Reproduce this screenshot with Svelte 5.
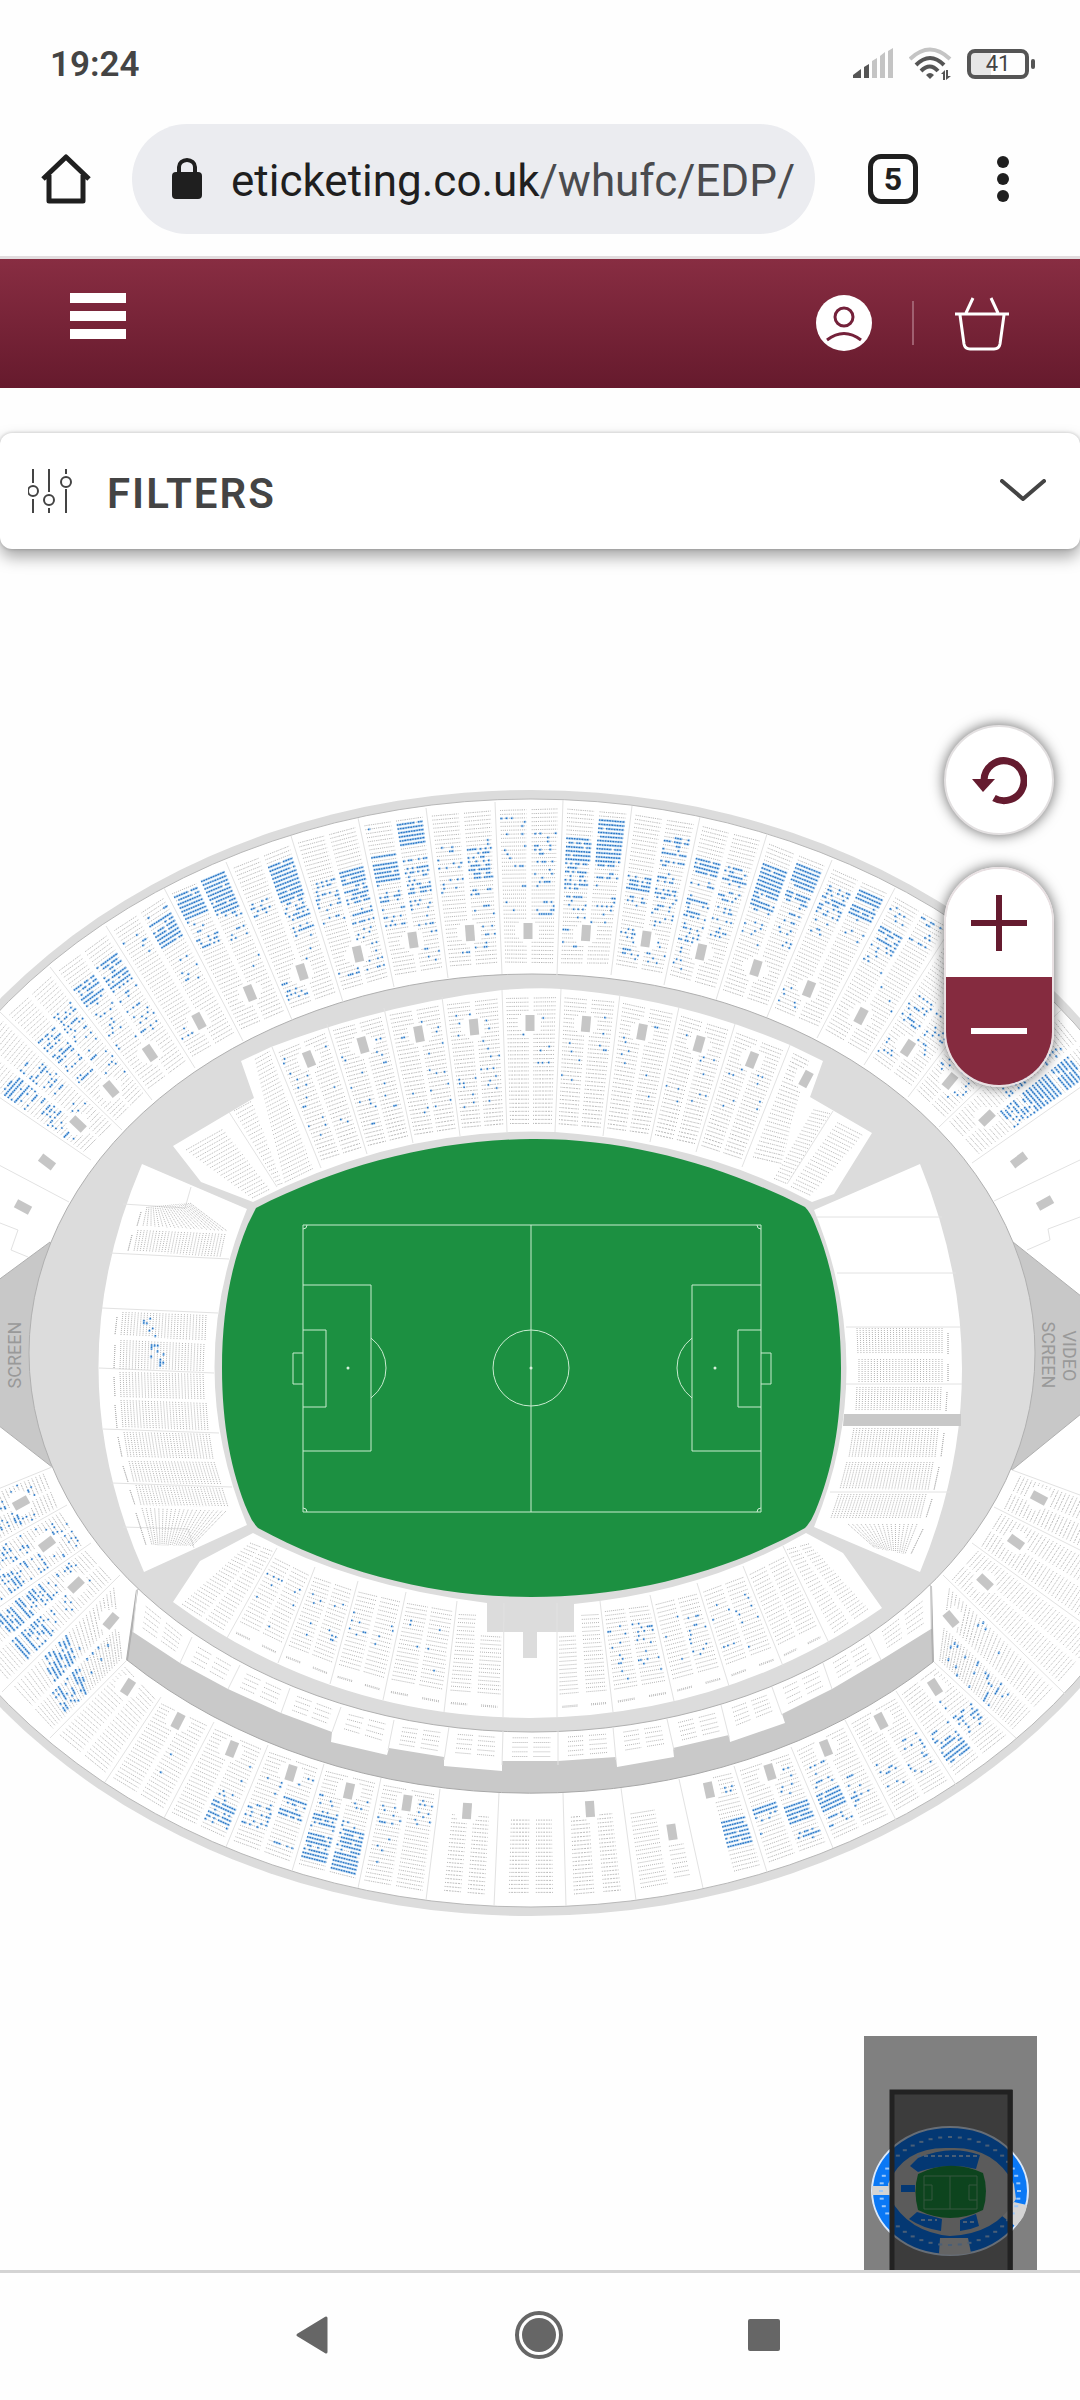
<script>
  // --- stadium geometry, in map units ---
  const CX = 531;
  const CY = 1353;

  // section dividers: [outer x, outer y, inner x, inner y]
  const upperTop = [
    [-45, 1067, 91, 1160], [0, 1012, 122, 1130], [50, 967, 152, 1100], [106, 926, 195, 1068],
    [164, 888, 243, 1041], [226, 862, 292, 1020], [291, 836, 343, 1002], [358, 818, 394, 987],
    [426, 808, 448, 978], [495, 802, 502, 974], [563, 800, 557, 975], [632, 806, 611, 975],
    [700, 817, 664, 985], [767, 834, 716, 1000], [832, 860, 767, 1017], [895, 888, 817, 1038],
    [955, 922, 864, 1065], [1010, 962, 908, 1097], [1061, 1010, 939, 1127], [1108, 1068, 972, 1163]
  ];

  const upperBottom = [
    [-115, 1535, 52, 1467], [-85, 1590, 67, 1505], [-45, 1638, 91, 1543], [2, 1692, 120, 1575],
    [50, 1738, 127, 1660], [105, 1782, 161, 1697], [164, 1818, 214, 1722], [226, 1847, 268, 1745],
    [292, 1871, 324, 1764], [358, 1888, 381, 1778], [426, 1900, 440, 1789], [494, 1906, 499, 1793],
    [566, 1906, 563, 1793], [636, 1900, 621, 1788], [703, 1888, 679, 1779], [767, 1872, 734, 1766],
    [833, 1848, 791, 1747], [896, 1820, 845, 1720], [956, 1785, 896, 1691], [1016, 1738, 934, 1662],
    [1065, 1694, 943, 1575], [1110, 1643, 972, 1543], [1150, 1585, 994, 1507], [1175, 1530, 1012, 1470]
  ];

  const lowerTop = [
    [272, 1047, 321, 1168], [327, 1024, 367, 1154], [384, 1008, 413, 1143], [442, 997, 460, 1136],
    [502, 990, 507, 1132], [561, 989, 555, 1132], [620, 994, 603, 1136], [679, 1007, 650, 1142],
    [735, 1024, 696, 1152], [790, 1045, 742, 1167]
  ];

  const lowerBottomLeft = [
    [227, 1638, 277, 1548], [278, 1663, 315, 1567], [330, 1684, 358, 1581],
    [383, 1700, 406, 1592], [444, 1712, 457, 1601], [503, 1717, 504, 1603]
  ];

  const lowerBottomRight = [
    [557, 1717, 557, 1603], [613, 1712, 600, 1601], [674, 1701, 650, 1595],
    [729, 1686, 697, 1583], [783, 1666, 743, 1566], [829, 1643, 783, 1546]
  ];

  const boxes = [
    [133, 1632, 137, 1590], [180, 1663, 192, 1637], [228, 1689, 240, 1665], [281, 1713, 290, 1688],
    [332, 1732, 341, 1707], [388, 1750, 394, 1720], [444, 1760, 449, 1727], [502, 1765, 503, 1731],
    [558, 1765, 558, 1731], [616, 1760, 613, 1727], [674, 1750, 667, 1719], [729, 1737, 721, 1705],
    [782, 1715, 772, 1687], [832, 1689, 823, 1663], [881, 1660, 869, 1635], [931, 1629, 931, 1586]
  ];

  // free seats per section: one list of [from, to, density] for each of its two columns
  const freeTop = [
    [[[.3, .5, .7], [.5, .9, .25]], [[.3, .6, .3], [.7, .9, .1]]],
    [[[.25, .5, .45], [.5, .7, .35]], [[.2, .5, .55], [.5, .9, .12]]],
    [[[.15, .32, .7], [.32, .7, .18]], [[.12, .4, .6], [.4, .7, .15]]],
    [[[.1, .25, .25], [.8, .9, .1]], [[.03, .08, .4], [.1, .28, .85], [.4, .6, .1]]],
    [[[.02, .2, .95], [.2, .45, .2]], [[0, .3, .85], [.3, .7, .1]]],
    [[[.25, .4, .35], [.8, .95, .15]], [[.08, .35, .9], [.35, .55, .4], [.55, .8, .12]]],
    [[[.28, .6, .2], [.85, .95, .2]], [[.25, .35, .75], [.35, .62, .5], [.65, .95, .1]]],
    [[[.02, .05, .3], [.2, .4, .85], [.4, .7, .3]], [[.02, .18, 1], [.25, .5, .45], [.5, .65, .25], [.7, .95, .12]]],
    [[[.2, .35, .3], [.35, .6, .15], [.85, .95, .15]], [[.18, .45, .35], [.5, .7, .2], [.75, .9, .2]]],
    [[[.05, .7, .15]], [[.15, .7, .15]]],
    [[[.18, .35, .9], [.35, .5, .45], [.5, .9, .2]], [[.03, .35, .92], [.35, .5, .4], [.5, .75, .25]]],
    [[[.38, .5, .65], [.5, .95, .15]], [[.1, .22, .7], [.25, .5, .5], [.5, .95, .2]]],
    [[[.2, .3, .9], [.3, .6, .4], [.6, .95, .2]], [[.2, .3, .45], [.3, .7, .25]]],
    [[[.12, .42, .85], [.42, .65, .2]], [[.05, .2, .75], [.2, .4, .55], [.4, .6, .15]]],
    [[[.1, .3, .4], [.3, .5, .1], [.8, .95, .08]], [[.05, .25, .95], [.3, .4, .08]]],
    [[[.03, .15, .7], [.15, .3, .5], [.3, .5, .1]], [[.02, .2, .15], [.5, .9, .06]]],
    [[[.4, .7, .25], [.8, .95, .15]], [[.5, .8, .2]]],
    [[[.5, .8, .15]], [[.5, .9, .2]]],
    [[[.1, .6, .4]], [[.1, .5, .9], [.5, .7, .5]]]
  ];

  const freeBottom = [
    [[[.2, .9, .15]], [[.2, .9, .2]]],
    [[[.2, .7, .45], [.7, 1, .12]], [[.2, .75, .5], [.75, 1, .15]]],
    [[[.2, .6, .5], [.6, .9, .15]], [[.2, .55, .6], [.6, .9, .1]]],
    [[[.2, .6, .6]], [[.2, .55, .5], [.6, .9, .1]]],
    [[], []],
    [[], [[.2, .6, .04]]],
    [[], [[.08, .34, .92], [.34, .45, .2], [.6, .8, .1]]],
    [[[.2, .45, .35], [.45, .8, .1]], [[.42, .62, .5], [.08, .15, .2], [.7, .9, .2]]],
    [[[.05, .35, .95], [.38, .6, .75], [.6, .75, .15]], [[.02, .48, .9], [.5, .85, .2]]],
    [[[.1, .9, .08]], [[.65, .95, .12]]],
    [[], []],
    [[], []],
    [[], []],
    [[], []],
    [[], [[.22, .55, .95], [.8, .9, .35]]],
    [[[.42, .6, .85], [.28, .34, .6]], [[.28, .52, .95], [.08, .18, .55], [.55, .9, .15]]],
    [[[.3, .52, .9], [.12, .22, .35], [.55, .8, .15]], [[.2, .6, .1]]],
    [[[.2, .5, .12]], [[.2, .6, .1]]],
    [[[.08, .32, .6], [.34, .5, .25]], [[.2, .5, .3], [.5, .8, .08]]],
    [[[.2, .6, .2], [.7, 1, .08]], [[.4, .7, .06]]],
    [[], []],
    [[], []],
    [[], []]
  ];

  // quads of the end stands: outer top, outer bottom, inner bottom, inner top
  const endStands = [
    [147, 1207, 143, 1226, 227, 1231, 190, 1203], [138, 1230, 134, 1251, 220, 1257, 225, 1234],
    [123, 1312, 121, 1335, 205, 1341, 206, 1315], [121, 1340, 120, 1369, 203, 1371, 204, 1344],
    [120, 1372, 121, 1397, 204, 1400, 203, 1374], [121, 1400, 123, 1428, 208, 1431, 206, 1403],
    [124, 1432, 128, 1457, 213, 1459, 209, 1434], [129, 1461, 134, 1482, 221, 1485, 214, 1462],
    [136, 1485, 141, 1505, 228, 1507, 222, 1488], [142, 1508, 152, 1545, 192, 1546, 226, 1511],
    [942, 1328, 942, 1354, 858, 1354, 857, 1328], [942, 1359, 942, 1382, 859, 1382, 859, 1359],
    [941, 1387, 940, 1411, 856, 1411, 857, 1387], [938, 1428, 935, 1457, 849, 1457, 854, 1428],
    [933, 1462, 928, 1490, 840, 1489, 847, 1462], [926, 1494, 920, 1518, 831, 1518, 839, 1494],
    [917, 1524, 905, 1554, 875, 1548, 848, 1524]
  ];

  const gates = [
    [23, 1207], [47, 1162], [78, 1124], [111, 1089], [150, 1053], [199, 1021], [250, 993], [302, 972],
    [358, 954], [413, 940], [470, 933], [528, 931], [586, 933], [646, 939], [701, 952], [756, 968],
    [809, 989], [861, 1016], [908, 1048], [950, 1081], [987, 1118], [1019, 1160], [1045, 1203],
    [309, 1059], [363, 1045], [419, 1034], [474, 1027], [530, 1023], [586, 1024], [642, 1032],
    [699, 1044], [752, 1060], [806, 1079],
    [21, 1503], [47, 1544], [76, 1585], [111, 1621], [128, 1687], [178, 1721], [232, 1749], [291, 1773],
    [349, 1791], [407, 1803], [467, 1811], [590, 1809], [672, 1832], [709, 1790], [770, 1772],
    [826, 1748], [881, 1721], [935, 1687], [951, 1619], [985, 1582], [1016, 1542], [1039, 1498]
  ].map(([x, y]) => {
    const angle = Math.atan2((x - CX) / 348100, -(y - CY) / 184900);
    return { x, y, angle: (angle * 180) / Math.PI };
  });

  let seed = 41;
  function random() {
    seed = (seed * 1664525 + 1013904223) % 4294967296;
    return seed / 4294967296;
  }

  const mix = (a, b, t) => a + (b - a) * t;
  const nearGate = (x, y) => gates.some((g) => Math.hypot(g.x - x, g.y - y) < 12);

  let takenPath = '';
  let freePath = '';

  // fills a quad (a-b outer edge, d-c inner edge) with rows of seats
  function fill(ax, ay, bx, by, cx, cy, dx, dy, { u = [0, 1], t = [0, 1], gap = 4, free = [], gated = false } = {}) {
    const depth = Math.hypot((dx + cx - ax - bx) / 2, (dy + cy - ay - by) / 2);
    const rows = Math.max(1, Math.floor((depth * (t[1] - t[0])) / gap));
    const at = (s, r) => [
      mix(mix(ax, bx, s), mix(dx, cx, s), r),
      mix(mix(ay, by, s), mix(dy, cy, s), r)
    ];
    const line = (s1, s2, r) => {
      const [x1, y1] = at(s1, r);
      const [x2, y2] = at(s2, r);
      if (gated && nearGate((x1 + x2) / 2, (y1 + y2) / 2)) return '';
      return `M${x1.toFixed(1)} ${y1.toFixed(1)}L${x2.toFixed(1)} ${y2.toFixed(1)}`;
    };

    for (let i = 0; i <= rows; i++) {
      const part = i / rows;
      const r = mix(t[0], t[1], part);
      const steps = gated ? 6 : 1;
      for (let k = 0; k < steps; k++) {
        takenPath += line(mix(u[0], u[1], k / steps), mix(u[0], u[1], (k + 1) / steps), r);
      }

      const band = free.find(([from, to]) => part >= from && part <= to);
      if (!band) continue;
      // dense bands are nearly whole rows, the others vary from row to row
      const chance = band[2] >= .8 ? (random() < band[2] ? .95 : .3) : band[2] * random() * 1.8;
      for (let k = 0; k < 10; k++) {
        if (random() < chance) freePath += line(mix(u[0], u[1], k / 10), mix(u[0], u[1], (k + .9) / 10), r);
      }
    }
  }

  function fillTier(dividers, free, options) {
    for (let i = 0; i < dividers.length - 1; i++) {
      const [ax, ay, dx, dy] = dividers[i];
      const [bx, by, cx, cy] = dividers[i + 1];
      options.columns.forEach((u, col) => {
        fill(ax, ay, bx, by, cx, cy, dx, dy, { ...options, u, free: free(i, col) });
      });
    }
  }

  const columns = [[.07, .46], [.54, .93]];
  fillTier(upperTop, (i, c) => freeTop[i][c], { columns, t: [.05, .93], gated: true });
  fillTier(upperBottom.slice(0, 11), (i, c) => freeBottom[i][c], { columns, t: [.08, .94], gated: true });
  fillTier(upperBottom.slice(10, 12), () => [], { columns: [[.25, .5], [.6, .85]], t: [.1, .78], gated: true });
  fillTier(upperBottom.slice(11, 13), () => [], { columns: [[.2, .48], [.58, .82]], t: [.12, .76], gated: true });
  fillTier(upperBottom.slice(12, 14), () => [], { columns: [[.12, .42], [.55, .8]], t: [.1, .78], gated: true });
  fillTier(upperBottom.slice(13, 15), () => [], { columns: [[.1, .5]], t: [.1, .76] });
  fillTier(upperBottom.slice(13, 15), () => [], { columns: [[.62, .85]], t: [.14, .42] });
  fillTier(upperBottom.slice(14, 16), () => freeBottom[14][1], { columns: [[.52, .93]], t: [.08, .94], gated: true });
  fillTier(upperBottom.slice(15), (i, c) => freeBottom[i + 15][c], { columns, t: [.08, .94], gated: true });
  fillTier(lowerTop, (i) => (i < 4 ? [[.05, .85, .05]] : [[.1, .7, .03]]), { columns, t: [.06, .94], gated: true });
  fillTier(lowerBottomLeft.slice(0, 5), () => [[.1, .8, .05]], { columns, t: [.2, .9] });
  fillTier(lowerBottomLeft.slice(4), () => [], { columns: [[.07, .43]], t: [.2, .88] });
  fillTier(lowerBottomLeft.slice(4), () => [], { columns: [[.55, .95]], t: [.2, .7] });
  fillTier(lowerBottomRight.slice(0, 2), () => [], { columns: [[.05, .4]], t: [.2, .7] });
  fillTier(lowerBottomRight.slice(0, 2), () => [], { columns: [[.55, .93]], t: [.2, .88] });
  fillTier(lowerBottomRight.slice(1), (i) => (i < 3 ? [[.1, .8, .07]] : []), { columns, t: [.2, .9] });
  fillTier(boxes, () => [], { columns: [[.18, .46], [.56, .86]], t: [.25, .8] });

  // rows set apart at the back of the lower tier
  fillTier(lowerBottomLeft, () => [], { columns: [[.1, .38], [.62, .9]], t: [.08, .09], gap: 9 });
  fillTier(lowerBottomRight, () => [], { columns: [[.1, .38], [.62, .9]], t: [.08, .09], gap: 9 });

  // corners
  fill(254, 1060, 272, 1050, 318, 1166, 283, 1183, { u: [.05, .85] });
  fill(232, 1112, 254, 1100, 283, 1183, 277, 1185, { u: [.1, .9] });
  fill(186, 1150, 227, 1127, 272, 1188, 252, 1198, { u: [0, .9] });
  fill(792, 1050, 815, 1062, 790, 1175, 745, 1165, { u: [.1, .75], gated: true, t: [.02, .92] });
  fill(806, 1108, 831, 1114, 788, 1184, 768, 1176, { u: [.3, .95] });
  fill(836, 1122, 864, 1136, 812, 1196, 790, 1186, { u: [.05, .95] });
  fill(182, 1604, 226, 1631, 274, 1552, 250, 1543, { u: [0, .45] });
  fill(182, 1604, 226, 1631, 274, 1552, 250, 1543, { u: [.55, .95] });
  fill(832, 1634, 872, 1606, 812, 1543, 786, 1550, { u: [.05, .42] });
  fill(832, 1634, 872, 1606, 812, 1543, 786, 1550, { u: [.55, .9] });

  endStands.forEach((q, i) => {
    fill(...q, { gap: 3, free: i === 2 || i === 3 ? [[.25, .55, .08]] : [] });
    const out = q[0] < CX ? -6 : 6;
    fill(q[0] + out, q[1] + 5, q[2] + out, q[3], q[2] + out, q[3], q[0] + out, q[1] + 5, { gap: 9 });
  });

  const dividerPath = [...upperTop, ...upperBottom, ...lowerTop, ...lowerBottomLeft, ...lowerBottomRight, ...boxes]
    .map(([x1, y1, x2, y2]) => `M${x1} ${y1}L${x2} ${y2}`)
    .join('');

  const miniTicks = Array.from({ length: 44 }, (_, i) => {
    const a = (i / 44) * Math.PI * 2;
    return {
      x: 86 + Math.cos(a) * 69,
      y: 155 + Math.sin(a) * 54
    };
  });
</script>

<div class="screen">
  <div class="status-bar">
    <span class="time">19:24</span>
    <div class="status-icons">
      <svg width="41" height="32" viewBox="0 0 41 32" aria-hidden="true">
        <path fill="#555" d="M0 30v-3l8-6v9zM11 30V19l5-3v14z" />
        <path fill="#c4c4c4" d="M19 30V13l5-3v20zM27 30V8l5-4v26zM35 30V3l5-3v30z" />
      </svg>
      <svg width="43" height="34" viewBox="0 0 43 34" aria-hidden="true">
        <g fill="none" stroke="#555" stroke-width="4">
          <path stroke="#c4c4c4" d="M1 12Q21-7 41 12" />
          <path d="M7 18Q21 4 35 18" />
          <path d="M12 24Q21 15 29 24" />
        </g>
        <path fill="#555" d="M21 32l-4-4q4-4 8 0zM32 27l4-4v10h-2v-6zM37 23h2v6h3l-5 4z" />
      </svg>
      <div class="battery"><span>41</span></div>
    </div>
  </div>

  <div class="browser-bar">
    <button class="icon-button" aria-label="Home">
      <svg width="50" height="52" viewBox="0 0 50 52">
        <path d="M2 26L25 4l23 22M8 22v26h34V22" fill="none" stroke="#1f1f1f" stroke-width="5" stroke-linejoin="round" />
      </svg>
    </button>
    <button class="address">
      <svg width="32" height="42" viewBox="0 0 32 42" aria-hidden="true">
        <rect x="1" y="14" width="30" height="27" rx="4" fill="#1f1f1f" />
        <path d="M8 16V9a8 7 0 0 1 16 0v7" fill="none" stroke="#1f1f1f" stroke-width="4" />
      </svg>
      <span class="url">eticketing.co.uk<span class="path">/whufc/EDP/</span></span>
    </button>
    <button class="tabs" aria-label="Open tabs">5</button>
    <button class="icon-button menu" aria-label="More">
      <svg width="12" height="46" viewBox="0 0 12 46" fill="#1f1f1f">
        <circle cx="6" cy="6" r="6" /><circle cx="6" cy="23" r="6" /><circle cx="6" cy="40" r="6" />
      </svg>
    </button>
  </div>

  <header>
    <button class="icon-button burger" aria-label="Menu">
      <span></span><span></span><span></span>
    </button>
    <div class="account">
      <a href="#account" aria-label="Account">
        <svg width="56" height="56" viewBox="0 0 56 56">
          <circle cx="28" cy="28" r="28" fill="#fff" />
          <g fill="none" stroke="#74213a" stroke-width="3">
            <circle cx="28" cy="22" r="9" />
            <path d="M11 45q17-13 34 0" />
          </g>
        </svg>
      </a>
      <span class="rule"></span>
      <a href="#basket" aria-label="Basket">
        <svg width="56" height="56" viewBox="0 0 56 56" fill="none" stroke="#fff" stroke-width="3">
          <path d="M1 19h54M6 20l4 29q1 5 6 5h24q5 0 6-5l4-29M12 18l7-15M44 18L37 3" />
        </svg>
      </a>
    </div>
  </header>

  <button class="filters">
    <svg width="44" height="44" viewBox="0 0 44 44" fill="none" stroke="#444" stroke-width="2">
      <path d="M5 0v14M5 30v14M21 0v23M21 39v5M38 0v5M38 20v24" />
      <circle cx="5" cy="22" r="5" /><circle cx="21" cy="31" r="5" /><circle cx="38" cy="13" r="5" />
    </svg>
    <span class="label">FILTERS</span>
    <svg width="46" height="24" viewBox="0 0 46 24" fill="none" stroke="#444" stroke-width="4">
      <path d="M2 2l21 18L44 2" stroke-linecap="round" stroke-linejoin="round" />
    </svg>
  </button>

  <main>
    <svg class="stadium" viewBox="0 549 1080 1721" role="img" aria-label="Stadium seat map">
      <ellipse cx={CX} cy={CY} rx="683" ry="563" fill="#dcdcdc" />
      <ellipse cx={CX} cy={CY} rx="676" ry="554" fill="#fff" stroke="#b8b8b8" />

      <!-- screens -->
      <g fill="#c8c8c8" stroke="#b0b0b0">
        <path d="M50 1242L-60 1323V1380L52 1467L90 1360Z" />
        <path d="M1013 1242L1140 1343V1366L1012 1470L980 1360Z" />
      </g>

      <path d="M127 1660A564 440 0 0 0 933 1662L931 1586L137 1590Z" fill="#c9c9c9" stroke="#a8a8a8" />
      <path
        fill="#fff"
        d="M137 1590L133 1632L180 1663L228 1689L281 1713L332 1732L331 1742L387 1755L389 1748L444 1757V1766L502 1771V1761H558L616 1757L617 1767L674 1757L673 1748L729 1735L730 1742L785 1723L782 1714L832 1689L881 1660L931 1629V1586Z"
      />
      <ellipse cx="532" cy={CY} rx="503" ry="379" fill="#dcdcdc" stroke="#b0b0b0" />
      <path d="M137 1590L127 1660M931 1586L933 1662" stroke="#b0b0b0" stroke-width="2" />

      <!-- lower tier -->
      <g fill="#fff">
        <path d="M253 1202L201 1182L173 1146L254 1098L241 1061L271 1047Q384 1004 502 990Q540 987 561 989Q680 998 790 1045L823 1061L810 1097L872 1133L834 1194L812 1202Q700 1142 555 1132Q400 1126 253 1202Z" />
        <path d="M253 1533L200 1561L173 1602Q330 1717 530 1718Q724 1717 882 1608L843 1553L806 1533Q703 1592 574 1604V1632H537V1658H523V1632H487V1603Q350 1586 253 1533Z" />
        <path d="M142 1164L247 1209Q182 1367 247 1525L144 1572Q54 1370 142 1164Z" />
        <path d="M920 1164L814 1210Q879 1368 814 1527L920 1572Q1004 1370 920 1164Z" />
      </g>
      <path d="M844 1414H961V1426H843Z" fill="#c8c8c8" />

      <path
        class="divider"
        d="{dividerPath}M-20 1155L69 1202M994 1201L1080 1160M0 1223L18 1230L11 1250L28 1257M1080 1217L1048 1229L1050 1240L1027 1250M123 1204L185 1208L191 1187M110 1253L229 1259M102 1308L218 1313M99 1368L214 1373M103 1429L219 1433M111 1483L232 1487M123 1527L188 1529L194 1548M817 1217H942M837 1273H956M846 1327H961M846 1384H962M830 1492H950M229 1112L277 1187M833 1111L787 1184"
      />
      <path class="taken" d={takenPath} />
      <path class="glow" d={freePath} />
      <path class="free" d={freePath} />

      {#each gates as gate}
        <rect x="-4.5" y="-8" width="9" height="16" fill="#c6c6c6" transform="translate({gate.x} {gate.y}) rotate({gate.angle})" />
      {/each}

      <!-- pitch -->
      <path
        fill="#1c9041"
        d="M256 1208C340 1165 435 1140 531 1139S722 1165 805 1207Q811 1213 815 1224C832 1264 841 1312 841 1368S832 1472 815 1512Q811 1522 805 1528C722 1574 627 1597 531 1597S340 1573 258 1528Q252 1522 248 1512C231 1472 222 1424 222 1368S231 1264 248 1224Z"
      />
      <g class="lines">
        <path d="M303 1225H761V1512H303ZM531 1225V1512M303 1285H371V1451H303M303 1330H326V1407H303M303 1353H293V1384H303M761 1285H692V1451H761M761 1330H738V1407H761M761 1353H771V1384H761M371 1338Q386 1350 386 1368T371 1398M692 1338Q677 1350 677 1368T692 1398M303 1229A4 4 0 0 0 307 1225M757 1225A4 4 0 0 0 761 1229M303 1508A4 4 0 0 1 307 1512M757 1512A4 4 0 0 1 761 1508" />
        <circle cx="531" cy="1368" r="38" />
      </g>
      <g fill="#d8f0dc">
        <circle cx="348" cy="1368" r="1.5" /><circle cx="531" cy="1368" r="1.5" /><circle cx="715" cy="1368" r="1.5" />
      </g>

      <g class="screen-label">
        <text transform="translate(21 1355) rotate(-90)">SCREEN</text>
        <text transform="translate(1042 1355) rotate(90)">SCREEN</text>
        <text transform="translate(1063 1356) rotate(90)">VIDEO</text>
      </g>
    </svg>

    <div class="zoom-controls">
      <button class="reset" aria-label="Reset view">
        <svg width="56" height="50" viewBox="0 0 56 50">
          <path d="M13 25A20 20 0 1 1 23 43" fill="none" stroke="#651b2f" stroke-width="7" />
          <path d="M1 24h23L12 37z" fill="#651b2f" />
        </svg>
      </button>
      <div class="zoom">
        <button aria-label="Zoom in">
          <svg width="56" height="56" viewBox="0 0 56 56"><path d="M0 28h56M28 0v56" stroke="#651b2f" stroke-width="6" /></svg>
        </button>
        <button class="out" aria-label="Zoom out">
          <svg width="56" height="56" viewBox="0 0 56 56"><path d="M0 28h56" stroke="#fff" stroke-width="6" /></svg>
        </button>
      </div>
    </div>

    <svg class="minimap" width="173" height="234" viewBox="0 0 173 234" aria-hidden="true">
      <rect width="173" height="234" fill="#808080" />
      <ellipse cx="86" cy="155" rx="78" ry="64" fill="#0a78f5" stroke="#dbe9fb" stroke-width="2" />
      <path d="M8 150h24v9H8zM150 166l13 3q-2 14-12 21l-13-10zM76 202h28l3 15q-16 3-32 1z" fill="#d4d4d4" />
      <path d="M24 148Q40 110 86 112Q130 110 150 148L152 163Q132 198 86 200Q44 196 26 162Z" fill="#c2c2c2" />
      <path d="M54 122Q86 108 116 119L112 133Q85 126 54 136L46 130Z" fill="#0a78f5" />
      <path d="M53 176L78 183L77 195Q58 192 45 183ZM96 184L112 178L115 190Q106 194 96 195ZM37 149h14v7H37z" fill="#0a78f5" />
      <path d="M54 138Q86 122 119 137Q125 155 119 174Q86 190 54 174Q49 155 54 138Z" fill="#1c9041" />
      <path d="M60 140h53v33H60zM86 140v33M60 149h8v15h-8M113 149h-8v15h8" fill="none" stroke="#71b884" stroke-width="1" />
      {#each miniTicks as tick}
        <rect x={tick.x - 2} y={tick.y - 1} width="4" height="2" fill="#9cc8fa" />
      {/each}
      <path d="M53 120h60M57 184h16M99 186h12" stroke="#9cc8fa" stroke-width="2" stroke-dasharray="4 3" />
      <rect x="26" y="54" width="123" height="180" fill="#000" fill-opacity=".53" />
      <path d="M28 234V56h118v178" fill="none" stroke="#222" stroke-width="5" />
    </svg>
  </main>

  <nav>
    <button class="icon-button" aria-label="Back">
      <svg width="52" height="52" viewBox="0 0 52 52"><path d="M11 26L39 9v34z" fill="#666" stroke="#666" stroke-width="3" stroke-linejoin="round" /></svg>
    </button>
    <button class="icon-button" aria-label="Home screen">
      <svg width="52" height="52" viewBox="0 0 52 52"><circle cx="26" cy="26" r="22" fill="none" stroke="#666" stroke-width="4" /><circle cx="26" cy="26" r="17" fill="#666" /></svg>
    </button>
    <button class="icon-button" aria-label="Recent apps">
      <svg width="52" height="52" viewBox="0 0 52 52"><rect x="9" y="10" width="32" height="32" rx="2" fill="#666" /></svg>
    </button>
  </nav>
</div>

<style>
  :global(body) {
    background: #fefefe;
  }

  .screen {
    font-family: Roboto, "Liberation Sans", sans-serif;
    color: #444;
    overflow: hidden;
  }

  button {
    font-family: inherit;
    color: inherit;
    cursor: pointer;
  }

  svg {
    display: block;
  }

  .icon-button {
    padding: 0;
    border: none;
    background: none;
  }

  .status-bar {
    display: flex;
    justify-content: space-between;
    align-items: center;
    box-sizing: border-box;
    height: 124px;
    padding: 8px 51px 4px 50px;
  }

  .time {
    font-size: 35px;
    font-weight: 600;
  }

  .status-icons {
    display: flex;
    align-items: center;
    gap: 15px;
  }

  .battery {
    position: relative;
    box-sizing: border-box;
    width: 62px;
    height: 30px;
    border: 4px solid #555;
    border-radius: 8px;
    background: linear-gradient(90deg, #e6e6e6 20px, transparent 20px);
    color: #444;
    font-size: 22px;
    line-height: 22px;
    text-align: center;
  }

  .battery::after {
    content: "";
    position: absolute;
    top: 6px;
    right: -10px;
    width: 4px;
    height: 10px;
    border-radius: 2px;
    background: #555;
  }

  .browser-bar {
    display: flex;
    align-items: center;
    height: 110px;
    padding: 0 71px 22px 41px;
    border-bottom: 3px solid #e2dcde;
  }

  .address {
    display: flex;
    flex: 1;
    align-items: center;
    gap: 28px;
    min-width: 0;
    height: 110px;
    margin: 0 53px 0 41px;
    padding: 0 24px 0 39px;
    border: none;
    border-radius: 55px;
    background: #ebecf0;
    text-align: left;
  }

  .address svg {
    flex: none;
  }

  .url {
    padding-top: 3px;
    color: #1f1f1f;
    font-size: 44px;
    white-space: nowrap;
  }

  .path {
    color: #4a4b4e;
  }

  .tabs {
    box-sizing: border-box;
    width: 50px;
    height: 50px;
    padding: 0;
    border: 5px solid #1f1f1f;
    border-radius: 13px;
    background: none;
    color: #1f1f1f;
    font-size: 32px;
    font-weight: 700;
    line-height: 40px;
  }

  .menu {
    margin-left: 79px;
  }

  header {
    display: flex;
    justify-content: space-between;
    align-items: center;
    box-sizing: border-box;
    height: 129px;
    padding: 0 70px;
    background: linear-gradient(#882d42, #661a2d);
  }

  .burger {
    display: grid;
    gap: 8px;
    padding-bottom: 16px;
  }

  .burger span {
    width: 56px;
    height: 10px;
    background: #fff;
  }

  .account {
    display: flex;
    align-items: center;
    gap: 40px;
    padding-bottom: 2px;
  }

  .rule {
    width: 2px;
    height: 44px;
    background: #a06070;
  }

  .filters {
    position: relative;
    display: flex;
    align-items: center;
    box-sizing: border-box;
    width: 100%;
    height: 116px;
    margin-top: 45px;
    padding: 0 34px 0 28px;
    border: none;
    border-radius: 12px;
    background: #fff;
    box-shadow: 0 0 3px 1px rgba(0, 0, 0, 0.12), 0 8px 16px rgba(0, 0, 0, 0.35);
    text-align: left;
  }

  .label {
    flex: 1;
    margin-left: 35px;
    padding-top: 4px;
    font-size: 42px;
    font-weight: 600;
    letter-spacing: 2px;
  }

  main {
    position: relative;
  }

  .stadium {
    width: 100%;
    height: auto;
  }

  .divider {
    fill: none;
    stroke: #e2e2e2;
  }

  .taken {
    fill: none;
    stroke: #b6b6b6;
    stroke-dasharray: 1 1;
  }

  .glow {
    fill: none;
    stroke: #d3e8f9;
    stroke-width: 3;
  }

  .free {
    fill: none;
    stroke: #2673c4;
    stroke-width: 1.5;
    stroke-dasharray: 1.5 0.5;
  }

  .lines {
    fill: none;
    stroke: #c9ecd0;
  }

  .screen-label {
    fill: #999;
    font-size: 18px;
    text-anchor: middle;
  }

  .zoom-controls {
    position: absolute;
    top: 176px;
    right: 26px;
    display: grid;
    gap: 32px;
    width: 110px;
  }

  .reset {
    display: grid;
    place-items: center;
    height: 110px;
    padding: 0;
    border: 2px solid #e3e0e1;
    border-radius: 50%;
    background: #fff;
    box-shadow: 0 0 14px rgba(0, 0, 0, 0.6);
  }

  .zoom {
    overflow: hidden;
    border: 2px solid #e8e0e2;
    border-radius: 55px;
    box-shadow: 0 0 14px rgba(0, 0, 0, 0.6);
  }

  .zoom button {
    display: grid;
    place-items: center;
    width: 100%;
    height: 108px;
    padding: 0;
    border: none;
    background: #fff;
  }

  .zoom .out {
    background: #852b3f;
  }

  .minimap {
    position: absolute;
    right: 43px;
    bottom: 0;
  }

  nav {
    position: relative;
    display: flex;
    justify-content: center;
    align-items: center;
    gap: 174px;
    box-sizing: border-box;
    height: 130px;
    padding: 0 3px 3px 0;
    border-top: 3px solid #d4d4d4;
    background: #fefefe;
  }
</style>
